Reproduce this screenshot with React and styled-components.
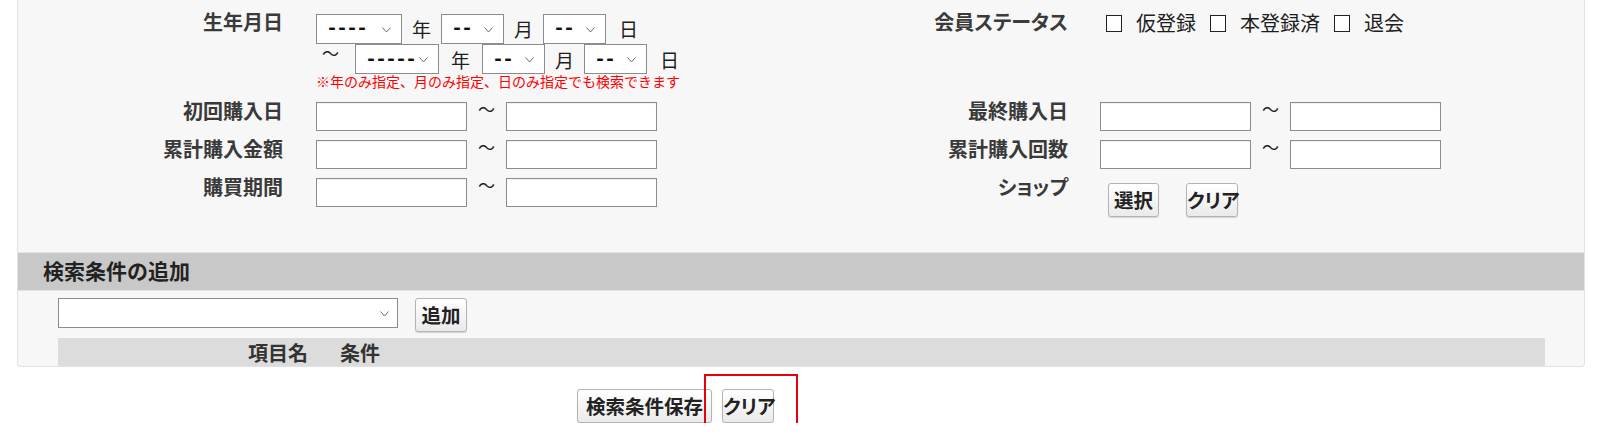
import React from "react";
import styled, { createGlobalStyle } from "styled-components";

const GlobalStyle = createGlobalStyle`
  html, body {
    margin: 0;
    padding: 0;
    background: #fff;
  }
  body {
    font-family: "Noto Sans CJK JP", "Noto Sans", sans-serif;
    color: #1e1e1e;
  }
`;

const Panel = styled.section`
  margin: 0 13px 0 17px;
  background: #f7f7f7;
  border: 1px solid #e2e2e2;
  border-top: none;
  border-radius: 0 0 4px 4px;
`;

const FormGrid = styled.div`
  display: grid;
  grid-template-columns: 282px 600px 185px 1fr;
  grid-template-rows: 89px 38px 38px 41px;
  padding: 11px 0 35px;
`;

const Label = styled.div`
  text-align: right;
  padding: 1px 17px 0 0;
  font-size: 20px;
  line-height: 20px;
  font-weight: bold;
  color: #3a3a3a;
  font-feature-settings: "palt";
  white-space: nowrap;
`;

const Field = styled.div`
  padding-left: ${(p) => p.$pad ?? 16}px;
`;

const Line = styled.div`
  display: flex;
  align-items: center;
  height: ${(p) => p.$h}px;
  margin-top: ${(p) => p.$mt ?? 0}px;
`;

const Unit = styled.span`
  font-size: 19px;
  line-height: 1;
  margin: 0 ${(p) => p.$m ?? 10}px;
`;

const Tilde = styled.span`
  font-size: 17px;
  line-height: 1;
  margin: 0 ${(p) => p.$r ?? 11}px 0 ${(p) => p.$l ?? 11}px;
  position: relative;
  top: -7px;
`;

const SelectWrap = styled.span`
  position: relative;
  display: block;
  flex: none;
  width: ${(p) => p.$w}px;
  height: 30px;
`;

const SelectBox = styled.select`
  appearance: none;
  display: block;
  box-sizing: border-box;
  width: ${(p) => p.$w}px;
  height: 30px;
  margin: 0;
  border: 1px solid #8c8c8c;
  border-radius: 0;
  background: #fff;
  color: #111;
  font-family: "Liberation Mono", monospace;
  font-size: 20px;
  font-weight: bold;
  letter-spacing: -2px;
  padding: 0 0 0 9px;
`;

const Chevron = styled.svg`
  position: absolute;
  right: ${(p) => p.$r ?? 11}px;
  top: 13px;
  pointer-events: none;
`;

const TextInput = styled.input`
  box-sizing: border-box;
  width: 151px;
  height: 29px;
  margin: 2px 0 0;
  border: 1px solid #8c8c8c;
  background: #fff;
  box-shadow: inset 0 1px 1px rgba(0, 0, 0, 0.06);
`;

const RangeRow = styled.div`
  display: flex;
  align-items: center;
`;

const Note = styled.div`
  color: #f00;
  font-size: 14px;
  line-height: 17px;
  margin-top: -1px;
  white-space: nowrap;
`;

const CheckRow = styled.div`
  display: flex;
  align-items: center;
  height: 22px;
  margin: 1px 0 0 6px;
`;

const CheckBox = styled.input.attrs({ type: "checkbox" })`
  appearance: none;
  box-sizing: border-box;
  width: 16px;
  height: 17px;
  margin: 0 14px 0 0;
  border: 1px solid #222;
  border-radius: 0;
  background: #fff;
`;

const CheckText = styled.span`
  font-size: 20px;
  line-height: 1;
  margin-right: 14px;
`;

const ButtonRow = styled.div`
  display: flex;
  gap: ${(p) => p.$gap ?? 10}px;
  margin: ${(p) => p.$m ?? "0"};
`;

const Button = styled.button`
  box-sizing: border-box;
  width: ${(p) => p.$w}px;
  height: 34px;
  padding: 0;
  font-family: "Noto Sans CJK JP", sans-serif;
  font-size: 19.5px;
  font-weight: bold;
  line-height: 1;
  font-feature-settings: "palt";
  color: #222;
  background: linear-gradient(#ffffff, #eaeaea);
  border: 1px solid #b4b4b4;
  border-radius: 3px;
  box-shadow: 0 1px 1px rgba(0, 0, 0, 0.15);
  white-space: nowrap;
`;

const SectionBar = styled.h3`
  box-sizing: border-box;
  margin: 0;
  height: 39px;
  display: flex;
  align-items: center;
  padding: 0 0 4px 25px;
  background: #c8c8c8;
  border-top: 1px solid #e3e3e3;
  border-bottom: 1px solid #e3e3e3;
  font-size: 21px;
  font-weight: bold;
  color: #222;
`;

const AddArea = styled.div`
  padding: 7px 39px 0 40px;
`;

const AddRow = styled.div`
  display: flex;
  align-items: flex-start;
  gap: 17px;
  height: 33px;
`;

const TableHead = styled.div`
  display: flex;
  align-items: center;
  gap: 32px;
  height: 28px;
  margin-top: 7px;
  padding-left: 190px;
  background: #dcdcdc;
  font-size: 20px;
  font-weight: bold;
  color: #333;
`;

const Footer = styled.div`
  display: flex;
  gap: 10px;
  margin-top: 22px;
  padding-left: 577px;
`;

const Marked = styled.div`
  position: relative;
`;

const Highlight = styled.div`
  position: absolute;
  left: -18px;
  top: -15px;
  width: 94px;
  height: 80px;
  box-sizing: border-box;
  border: 2px solid #e8000b;
  pointer-events: none;
`;

function Select({ w, value, chevronRight }) {
  return (
    <SelectWrap $w={w}>
      <SelectBox $w={w} defaultValue={value}>
        <option value={value}>{value}</option>
      </SelectBox>
      <Chevron $r={chevronRight} width="9" height="6" viewBox="0 0 9 6">
        <path d="M0.5 0.5 L4.5 5 L8.5 0.5" fill="none" stroke="#6b6b6b" strokeWidth="1" />
      </Chevron>
    </SelectWrap>
  );
}

function Range() {
  return (
    <RangeRow>
      <TextInput />
      <Tilde>〜</Tilde>
      <TextInput />
    </RangeRow>
  );
}

export default function App() {
  return (
    <>
      <GlobalStyle />
      <Panel>
        <FormGrid>
          <Label>生年月日</Label>
          <Field>
            <Line $h={31} $mt={2}>
              <Select w={86} value="----" />
              <Unit>年</Unit>
              <Select w={63} value="--" />
              <Unit>月</Unit>
              <Select w={63} value="--" />
              <Unit $m={13}>日</Unit>
            </Line>
            <Line $h={30}>
              <Tilde $l={6} $r={16}>〜</Tilde>
              <Select w={84} value="-----" />
              <Unit $m={12}>年</Unit>
              <Select w={63} value="--" />
              <Unit>月</Unit>
              <Select w={63} value="--" />
              <Unit $m={13}>日</Unit>
            </Line>
            <Note>※年のみ指定、月のみ指定、日のみ指定でも検索できます</Note>
          </Field>
          <Label>会員ステータス</Label>
          <Field $pad={15}>
            <CheckRow>
              <CheckBox />
              <CheckText>仮登録</CheckText>
              <CheckBox />
              <CheckText>本登録済</CheckText>
              <CheckBox />
              <CheckText>退会</CheckText>
            </CheckRow>
          </Field>

          <Label>初回購入日</Label>
          <Field>
            <Range />
          </Field>
          <Label>最終購入日</Label>
          <Field $pad={15}>
            <Range />
          </Field>

          <Label>累計購入金額</Label>
          <Field>
            <Range />
          </Field>
          <Label>累計購入回数</Label>
          <Field $pad={15}>
            <Range />
          </Field>

          <Label>購買期間</Label>
          <Field>
            <Range />
          </Field>
          <Label>ショップ</Label>
          <Field $pad={15}>
            <ButtonRow $gap={27} $m="7px 0 0 8px">
              <Button $w={51}>選択</Button>
              <Button $w={52}>クリア</Button>
            </ButtonRow>
          </Field>
        </FormGrid>

        <SectionBar>検索条件の追加</SectionBar>
        <AddArea>
          <AddRow>
            <Select w={340} value="" chevronRight={9} />
            <Button $w={52}>追加</Button>
          </AddRow>
          <TableHead>
            <span>項目名</span>
            <span>条件</span>
          </TableHead>
        </AddArea>
      </Panel>

      <Footer>
        <Button $w={135}>検索条件保存</Button>
        <Marked>
          <Button $w={52}>クリア</Button>
          <Highlight />
        </Marked>
      </Footer>
    </>
  );
}
